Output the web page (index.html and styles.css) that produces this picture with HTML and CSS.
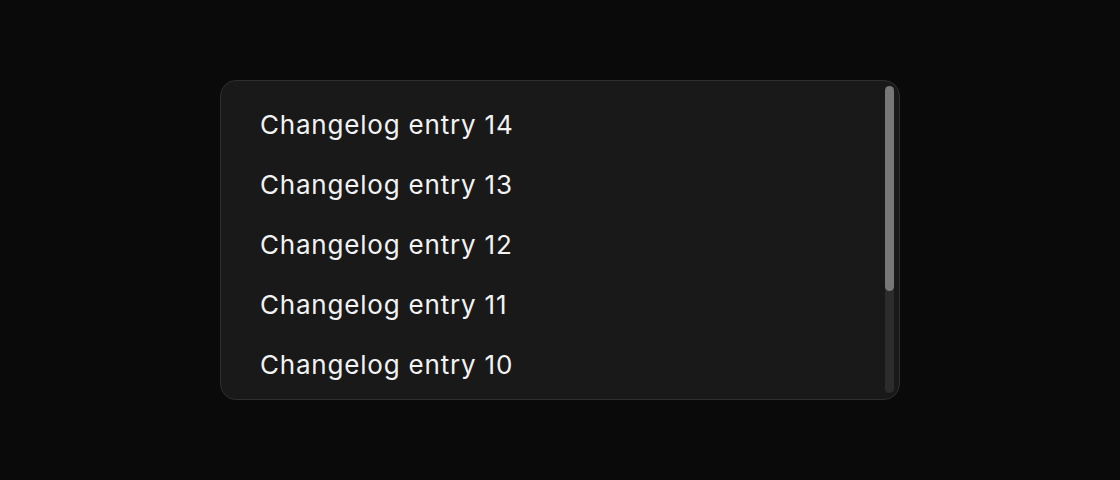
FILE: index.html
```html
<!DOCTYPE html>
<html lang="en">
<head>
    <meta charset="UTF-8">
    <meta name="viewport" content="width=device-width, initial-scale=1.0">
    <title>Changelog</title>
    <link rel="stylesheet" href="styles.css">
</head>
<body>
    <div class="panel">
        <ul class="entries">
            <li>Changelog entry 14</li>
            <li>Changelog entry 13</li>
            <li>Changelog entry 12</li>
            <li>Changelog entry 11</li>
            <li>Changelog entry 10</li>
        </ul>
        <div class="scrollbar">
            <div class="thumb"></div>
        </div>
    </div>
</body>
</html>
```

FILE: styles.css
```css
body {
    margin: 0;
    height: 480px;
    background-color: #0a0a0a;
    font-family: Inter, "Noto Sans", sans-serif;
    display: flex;
    justify-content: center;
    align-items: center;
}
.panel {
    width: 680px;
    height: 320px;
    box-sizing: border-box;
    display: flex;
    padding: 5px 5px 6px 0;
    background-color: #191919;
    border: 1px solid #2e2e2e;
    border-radius: 16px;
    overflow: hidden;
}
.entries {
    flex: 1;
    list-style: none;
    margin: 0;
    padding: 9px 0 0 39px;
    overflow: hidden;
}
.entries li {
    height: 60px;
    line-height: 60px;
    font-size: 26px;
    letter-spacing: 0.8px;
    color: #f2f2f2;
}
.scrollbar {
    width: 9px;
    background-color: #2c2c2c;
    border-radius: 5px;
}
.thumb {
    height: 205px;
    background-color: #777777;
    border-radius: 5px;
}
```
